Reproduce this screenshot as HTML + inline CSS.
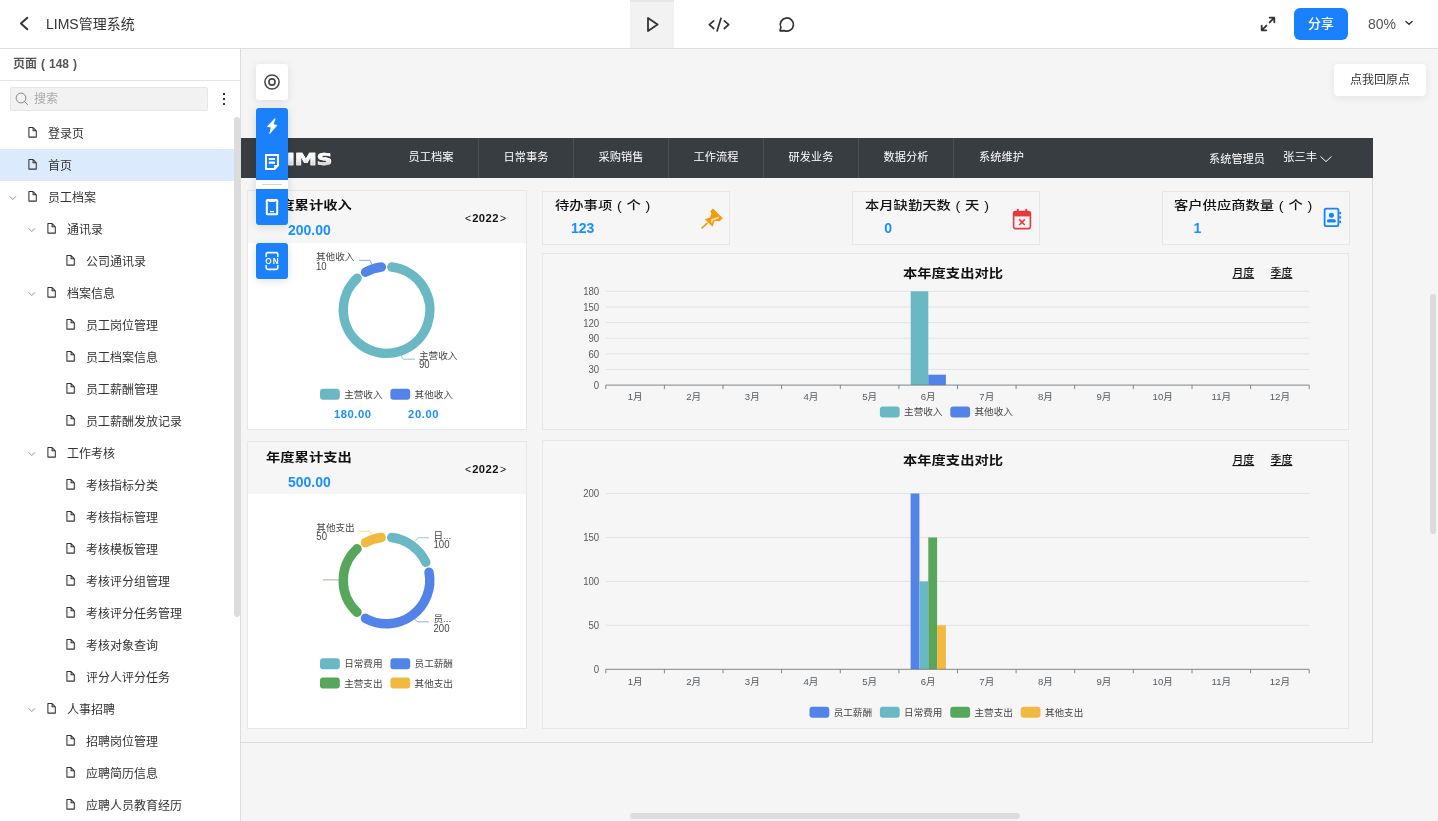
<!DOCTYPE html><html lang="zh-CN"><head><meta charset="utf-8"><title>LIMS管理系统</title><style>
*{box-sizing:border-box;margin:0;padding:0}
html,body{width:1438px;height:821px;overflow:hidden;background:#f5f5f5;font-family:"Liberation Sans", "Noto Sans CJK SC", sans-serif;color:#333}
.abs{position:absolute}
#top,#side,#canvas{will-change:transform}
#top{position:absolute;left:0;top:0;width:1438px;height:49px;z-index:30}
#topbg{position:absolute;left:0;top:0;width:1438px;height:49px;background:#fff;border-bottom:1px solid #dedede;z-index:29}
#side{position:absolute;left:0;top:49px;width:241px;height:772px;z-index:20;overflow:hidden}
#sidebg{position:absolute;left:0;top:49px;width:241px;height:772px;background:#fff;border-right:1px solid #dcdcdc;z-index:19}
#canvas{position:absolute;left:241px;top:49px;width:1197px;height:772px;overflow:hidden}
.row{position:absolute;left:0;width:234px;height:32px;font-size:12px;line-height:32px;color:#333;white-space:nowrap}
.row.sel{background:#dbeafc}
.row svg{position:absolute}
.row span{position:absolute;top:1px}
.t{position:absolute;white-space:nowrap}
.bold{font-weight:bold}
.blue{color:#1890ff}
.card{position:absolute;border:1px solid #e7e7e7;background:#f6f6f6}
.menu{position:absolute;top:0;height:40px;width:95px;text-align:center;color:#fff;font-size:11.2px;line-height:38px;border-right:1px solid #4a4f54}
.fbtn{position:absolute;left:15px;width:32px;background:#1a80fc;box-shadow:0 2px 10px rgba(0,0,0,.12)}
.fp{display:inline-block;text-align:center}
.lg{position:absolute;font-size:9.6px;line-height:12px;color:#444;white-space:nowrap}
.sw{position:absolute;width:20px;height:11px;border-radius:3px}
</style></head><body>
<div id="topbg"></div><div id="sidebg"></div>
<div id="top">
<svg class="abs" style="left:17px;top:15px" width="14" height="18" viewBox="0 0 14 18"><path d="M10.3 2.7 L3.9 8.5 L10.3 14.3" fill="none" stroke="#333" stroke-width="1.9" stroke-linecap="round" stroke-linejoin="round"/></svg>
<div class="t" style="left:46px;top:14px;font-size:14px;line-height:20px;color:#333">LIMS管理系统</div>
<div class="abs" style="left:630px;top:0;width:44px;height:48px;background:#f2f2f2;border-top:2px solid #e6e6e6"></div>
<svg class="abs" style="left:644px;top:14px" width="20" height="20" viewBox="0 0 20 20"><path d="M4 4 L4 17 L13.6 10.5 Z" fill="none" stroke="#333" stroke-width="1.8" stroke-linejoin="round"/></svg>
<svg class="abs" style="left:706px;top:14px" width="26" height="20" viewBox="0 0 26 20"><path d="M7.7 6.9 L3.3 10.7 L7.7 14.5 M18.3 6.9 L22.7 10.7 L18.3 14.5 M15 4.2 L11.1 17" fill="none" stroke="#333" stroke-width="1.7" stroke-linecap="round" stroke-linejoin="round"/></svg>
<svg class="abs" style="left:776px;top:14px" width="20" height="20" viewBox="0 0 20 20"><path d="M4 16.8 L4.9 13.4 A6.6 6.6 0 1 1 8.2 16.6 Z" fill="none" stroke="#333" stroke-width="1.7" stroke-linejoin="round"/></svg>
<svg class="abs" style="left:1258px;top:14px" width="20" height="20" viewBox="0 0 20 20"><path d="M3.7 16.3 L8.4 11.6 M3.7 11.7 L3.7 16.3 L8.3 16.3 M16.3 3.7 L11.6 8.4 M11.7 3.7 L16.3 3.7 L16.3 8.3" fill="none" stroke="#333" stroke-width="1.8" stroke-linecap="round" stroke-linejoin="round"/></svg>
<div class="abs" style="left:1294px;top:8px;width:54px;height:32px;border-radius:6px;background:#1a80fc;color:#fff;font-size:13px;line-height:31px;text-align:center;font-weight:500">分享</div>
<div class="t" style="left:1368px;top:14px;font-size:14px;line-height:20px;color:#555">80%</div>
<svg class="abs" style="left:1403px;top:18px" width="12" height="10" viewBox="0 0 12 10"><path d="M2.9 3.4 L6 6.3 L9.1 3.4" fill="none" stroke="#333" stroke-width="1.4" stroke-linecap="round" stroke-linejoin="round"/></svg>
</div>
<div id="side">
<div class="t bold" style="left:13px;top:6px;font-size:12px;line-height:18px;color:#555">页面<span class="fp" style="width:12px">(</span>148<span class="fp" style="width:12px">)</span></div>
<div class="abs" style="left:0;top:31px;width:240px;height:1px;background:#e3e3e3"></div>
<div class="abs" style="left:10px;top:38px;width:198px;height:24px;background:#f2f2f2;border:1px solid #e6e6e6;border-radius:2px"></div>
<svg class="abs" style="left:14px;top:42px" width="16" height="16" viewBox="0 0 16 16"><circle cx="7" cy="7" r="4.9" fill="none" stroke="#888" stroke-width="1"/><path d="M10.6 10.6 L13.6 13.6" stroke="#888" stroke-width="1" stroke-linecap="round"/></svg>
<div class="t" style="left:34px;top:41px;font-size:12px;line-height:18px;color:#aaa">搜索</div>
<div class="abs" style="left:223px;top:44px;width:2px;height:2px;background:#333"></div>
<div class="abs" style="left:223px;top:49px;width:2px;height:2px;background:#333"></div>
<div class="abs" style="left:223px;top:54px;width:2px;height:2px;background:#333"></div>
<div class="abs" style="left:234px;top:68px;width:6px;height:500px;background:#dcdcdc;border-radius:3px;z-index:5"></div>
<div class="row" style="top:68px">
<svg style="left:26.5px;top:9px" width="11" height="13" viewBox="0 0 11 13"><path d="M1.9 1.5 H6.1 L9.3 4.8 V11.1 H1.9 Z M6.1 1.5 V4.8 H9.3" fill="none" stroke="#333" stroke-width="1.05" stroke-linejoin="round"/></svg>
<span style="left:48px">登录页</span>
</div>
<div class="row sel" style="top:100px">
<svg style="left:26.5px;top:9px" width="11" height="13" viewBox="0 0 11 13"><path d="M1.9 1.5 H6.1 L9.3 4.8 V11.1 H1.9 Z M6.1 1.5 V4.8 H9.3" fill="none" stroke="#333" stroke-width="1.05" stroke-linejoin="round"/></svg>
<span style="left:48px">首页</span>
</div>
<div class="row" style="top:132px">
<svg style="left:7.5px;top:12.5px" width="9" height="8" viewBox="0 0 9 8"><path d="M1.7 2.5 L4.8 5.5 L7.9 2.5" fill="none" stroke="#8a8a8a" stroke-width="0.9" stroke-linecap="round" stroke-linejoin="round"/></svg>
<svg style="left:26.5px;top:9px" width="11" height="13" viewBox="0 0 11 13"><path d="M1.9 1.5 H6.1 L9.3 4.8 V11.1 H1.9 Z M6.1 1.5 V4.8 H9.3" fill="none" stroke="#333" stroke-width="1.05" stroke-linejoin="round"/></svg>
<span style="left:48px">员工档案</span>
</div>
<div class="row" style="top:164px">
<svg style="left:26.5px;top:12.5px" width="9" height="8" viewBox="0 0 9 8"><path d="M1.7 2.5 L4.8 5.5 L7.9 2.5" fill="none" stroke="#8a8a8a" stroke-width="0.9" stroke-linecap="round" stroke-linejoin="round"/></svg>
<svg style="left:45.5px;top:9px" width="11" height="13" viewBox="0 0 11 13"><path d="M1.9 1.5 H6.1 L9.3 4.8 V11.1 H1.9 Z M6.1 1.5 V4.8 H9.3" fill="none" stroke="#333" stroke-width="1.05" stroke-linejoin="round"/></svg>
<span style="left:67px">通讯录</span>
</div>
<div class="row" style="top:196px">
<svg style="left:64.5px;top:9px" width="11" height="13" viewBox="0 0 11 13"><path d="M1.9 1.5 H6.1 L9.3 4.8 V11.1 H1.9 Z M6.1 1.5 V4.8 H9.3" fill="none" stroke="#333" stroke-width="1.05" stroke-linejoin="round"/></svg>
<span style="left:86px">公司通讯录</span>
</div>
<div class="row" style="top:228px">
<svg style="left:26.5px;top:12.5px" width="9" height="8" viewBox="0 0 9 8"><path d="M1.7 2.5 L4.8 5.5 L7.9 2.5" fill="none" stroke="#8a8a8a" stroke-width="0.9" stroke-linecap="round" stroke-linejoin="round"/></svg>
<svg style="left:45.5px;top:9px" width="11" height="13" viewBox="0 0 11 13"><path d="M1.9 1.5 H6.1 L9.3 4.8 V11.1 H1.9 Z M6.1 1.5 V4.8 H9.3" fill="none" stroke="#333" stroke-width="1.05" stroke-linejoin="round"/></svg>
<span style="left:67px">档案信息</span>
</div>
<div class="row" style="top:260px">
<svg style="left:64.5px;top:9px" width="11" height="13" viewBox="0 0 11 13"><path d="M1.9 1.5 H6.1 L9.3 4.8 V11.1 H1.9 Z M6.1 1.5 V4.8 H9.3" fill="none" stroke="#333" stroke-width="1.05" stroke-linejoin="round"/></svg>
<span style="left:86px">员工岗位管理</span>
</div>
<div class="row" style="top:292px">
<svg style="left:64.5px;top:9px" width="11" height="13" viewBox="0 0 11 13"><path d="M1.9 1.5 H6.1 L9.3 4.8 V11.1 H1.9 Z M6.1 1.5 V4.8 H9.3" fill="none" stroke="#333" stroke-width="1.05" stroke-linejoin="round"/></svg>
<span style="left:86px">员工档案信息</span>
</div>
<div class="row" style="top:324px">
<svg style="left:64.5px;top:9px" width="11" height="13" viewBox="0 0 11 13"><path d="M1.9 1.5 H6.1 L9.3 4.8 V11.1 H1.9 Z M6.1 1.5 V4.8 H9.3" fill="none" stroke="#333" stroke-width="1.05" stroke-linejoin="round"/></svg>
<span style="left:86px">员工薪酬管理</span>
</div>
<div class="row" style="top:356px">
<svg style="left:64.5px;top:9px" width="11" height="13" viewBox="0 0 11 13"><path d="M1.9 1.5 H6.1 L9.3 4.8 V11.1 H1.9 Z M6.1 1.5 V4.8 H9.3" fill="none" stroke="#333" stroke-width="1.05" stroke-linejoin="round"/></svg>
<span style="left:86px">员工薪酬发放记录</span>
</div>
<div class="row" style="top:388px">
<svg style="left:26.5px;top:12.5px" width="9" height="8" viewBox="0 0 9 8"><path d="M1.7 2.5 L4.8 5.5 L7.9 2.5" fill="none" stroke="#8a8a8a" stroke-width="0.9" stroke-linecap="round" stroke-linejoin="round"/></svg>
<svg style="left:45.5px;top:9px" width="11" height="13" viewBox="0 0 11 13"><path d="M1.9 1.5 H6.1 L9.3 4.8 V11.1 H1.9 Z M6.1 1.5 V4.8 H9.3" fill="none" stroke="#333" stroke-width="1.05" stroke-linejoin="round"/></svg>
<span style="left:67px">工作考核</span>
</div>
<div class="row" style="top:420px">
<svg style="left:64.5px;top:9px" width="11" height="13" viewBox="0 0 11 13"><path d="M1.9 1.5 H6.1 L9.3 4.8 V11.1 H1.9 Z M6.1 1.5 V4.8 H9.3" fill="none" stroke="#333" stroke-width="1.05" stroke-linejoin="round"/></svg>
<span style="left:86px">考核指标分类</span>
</div>
<div class="row" style="top:452px">
<svg style="left:64.5px;top:9px" width="11" height="13" viewBox="0 0 11 13"><path d="M1.9 1.5 H6.1 L9.3 4.8 V11.1 H1.9 Z M6.1 1.5 V4.8 H9.3" fill="none" stroke="#333" stroke-width="1.05" stroke-linejoin="round"/></svg>
<span style="left:86px">考核指标管理</span>
</div>
<div class="row" style="top:484px">
<svg style="left:64.5px;top:9px" width="11" height="13" viewBox="0 0 11 13"><path d="M1.9 1.5 H6.1 L9.3 4.8 V11.1 H1.9 Z M6.1 1.5 V4.8 H9.3" fill="none" stroke="#333" stroke-width="1.05" stroke-linejoin="round"/></svg>
<span style="left:86px">考核模板管理</span>
</div>
<div class="row" style="top:516px">
<svg style="left:64.5px;top:9px" width="11" height="13" viewBox="0 0 11 13"><path d="M1.9 1.5 H6.1 L9.3 4.8 V11.1 H1.9 Z M6.1 1.5 V4.8 H9.3" fill="none" stroke="#333" stroke-width="1.05" stroke-linejoin="round"/></svg>
<span style="left:86px">考核评分组管理</span>
</div>
<div class="row" style="top:548px">
<svg style="left:64.5px;top:9px" width="11" height="13" viewBox="0 0 11 13"><path d="M1.9 1.5 H6.1 L9.3 4.8 V11.1 H1.9 Z M6.1 1.5 V4.8 H9.3" fill="none" stroke="#333" stroke-width="1.05" stroke-linejoin="round"/></svg>
<span style="left:86px">考核评分任务管理</span>
</div>
<div class="row" style="top:580px">
<svg style="left:64.5px;top:9px" width="11" height="13" viewBox="0 0 11 13"><path d="M1.9 1.5 H6.1 L9.3 4.8 V11.1 H1.9 Z M6.1 1.5 V4.8 H9.3" fill="none" stroke="#333" stroke-width="1.05" stroke-linejoin="round"/></svg>
<span style="left:86px">考核对象查询</span>
</div>
<div class="row" style="top:612px">
<svg style="left:64.5px;top:9px" width="11" height="13" viewBox="0 0 11 13"><path d="M1.9 1.5 H6.1 L9.3 4.8 V11.1 H1.9 Z M6.1 1.5 V4.8 H9.3" fill="none" stroke="#333" stroke-width="1.05" stroke-linejoin="round"/></svg>
<span style="left:86px">评分人评分任务</span>
</div>
<div class="row" style="top:644px">
<svg style="left:26.5px;top:12.5px" width="9" height="8" viewBox="0 0 9 8"><path d="M1.7 2.5 L4.8 5.5 L7.9 2.5" fill="none" stroke="#8a8a8a" stroke-width="0.9" stroke-linecap="round" stroke-linejoin="round"/></svg>
<svg style="left:45.5px;top:9px" width="11" height="13" viewBox="0 0 11 13"><path d="M1.9 1.5 H6.1 L9.3 4.8 V11.1 H1.9 Z M6.1 1.5 V4.8 H9.3" fill="none" stroke="#333" stroke-width="1.05" stroke-linejoin="round"/></svg>
<span style="left:67px">人事招聘</span>
</div>
<div class="row" style="top:676px">
<svg style="left:64.5px;top:9px" width="11" height="13" viewBox="0 0 11 13"><path d="M1.9 1.5 H6.1 L9.3 4.8 V11.1 H1.9 Z M6.1 1.5 V4.8 H9.3" fill="none" stroke="#333" stroke-width="1.05" stroke-linejoin="round"/></svg>
<span style="left:86px">招聘岗位管理</span>
</div>
<div class="row" style="top:708px">
<svg style="left:64.5px;top:9px" width="11" height="13" viewBox="0 0 11 13"><path d="M1.9 1.5 H6.1 L9.3 4.8 V11.1 H1.9 Z M6.1 1.5 V4.8 H9.3" fill="none" stroke="#333" stroke-width="1.05" stroke-linejoin="round"/></svg>
<span style="left:86px">应聘简历信息</span>
</div>
<div class="row" style="top:740px">
<svg style="left:64.5px;top:9px" width="11" height="13" viewBox="0 0 11 13"><path d="M1.9 1.5 H6.1 L9.3 4.8 V11.1 H1.9 Z M6.1 1.5 V4.8 H9.3" fill="none" stroke="#333" stroke-width="1.05" stroke-linejoin="round"/></svg>
<span style="left:86px">应聘人员教育经历</span>
</div>
</div>
<div id="canvas">
<div class="abs" style="left:0;top:89px;width:1132px;height:605px;border-right:1px solid #dcdcdc;border-bottom:1px solid #dcdcdc"></div>
<div class="abs" style="left:0;top:89px;width:1132px;height:40px;background:#383d42">
<div class="t" style="left:32px;top:13.4px;font-family:'DejaVu Sans',sans-serif;font-weight:bold;font-size:16.4px;line-height:18px;transform:scaleX(1.36);transform-origin:0 0;letter-spacing:-.3px;-webkit-text-stroke:.5px #fff;background:linear-gradient(180deg,#fff 35%,#c8c8c8 85%);-webkit-background-clip:text;background-clip:text;color:transparent">LIMS</div>
<div class="menu" style="left:143px">员工档案</div>
<div class="menu" style="left:238px">日常事务</div>
<div class="menu" style="left:333px">采购销售</div>
<div class="menu" style="left:428px">工作流程</div>
<div class="menu" style="left:523px">研发业务</div>
<div class="menu" style="left:618px">数据分析</div>
<div class="menu" style="left:713px;border-right:none">系统维护</div>
<div class="t" style="left:968px;top:12px;color:#fff;font-size:11.2px;line-height:18px">系统管理员</div>
<div class="t" style="left:1042px;top:10px;color:#fff;font-size:11.4px;line-height:18px">张三丰</div>
<svg class="abs" style="left:1078px;top:16px" width="14" height="10" viewBox="0 0 14 10"><path d="M1.8 2.7 L7 7.6 L12.2 2.7" fill="none" stroke="#fff" stroke-width="1" stroke-linecap="round" stroke-linejoin="round"/></svg>
</div>
<div class="card" style="left:6px;top:141px;width:280px;height:240px;background:#fff">
<div class="abs" style="left:0;top:0;width:278px;height:52px;background:#f6f6f6"></div>
<div class="t bold" style="left:18px;top:4.7px;font-size:14.3px;line-height:20px;color:#111;transform:scaleY(.85)">年度累计收入</div>
<div class="t bold blue" style="left:40px;top:29.9px;font-size:14px;line-height:18px">200.00</div>
<div class="t bold" style="left:217px;top:18px;font-size:11.2px;line-height:18px;color:#111"><span style="font-weight:normal;font-size:10.5px;position:relative;top:-.3px">&lt;</span><span style="letter-spacing:.5px;margin-left:1px">2022</span><span style="font-weight:normal;font-size:10.5px;position:relative;top:-.3px;margin-left:1px">&gt;</span></div>
</div>
<div class="card" style="left:6px;top:392px;width:280px;height:288px;background:#fff">
<div class="abs" style="left:0;top:0;width:278px;height:52px;background:#f6f6f6"></div>
<div class="t bold" style="left:18px;top:5.6px;font-size:14.3px;line-height:20px;color:#111;transform:scaleY(.85)">年度累计支出</div>
<div class="t bold blue" style="left:40px;top:30.8px;font-size:14px;line-height:18px">500.00</div>
<div class="t bold" style="left:217px;top:18px;font-size:11.2px;line-height:18px;color:#111"><span style="font-weight:normal;font-size:10.5px;position:relative;top:-.3px">&lt;</span><span style="letter-spacing:.5px;margin-left:1px">2022</span><span style="font-weight:normal;font-size:10.5px;position:relative;top:-.3px;margin-left:1px">&gt;</span></div>
</div>
<div class="card" style="left:301px;top:142px;width:188px;height:54px">
<div class="t" style="left:12px;top:3.5px;font-size:14.3px;line-height:20px;color:#111;font-weight:500;transform:scaleY(.85)">待办事项<span class="fp" style="width:14.3px">(</span>个<span class="fp" style="width:14.3px">)</span></div>
<div class="t bold blue" style="left:28.0px;top:27.2px;font-size:14px;line-height:18px">123</div>
<svg class="abs" style="left:157.4px;top:15.3px" width="24" height="24" viewBox="0 0 24 24"><path d="M2 21 L7 16.3" stroke="#f39c0b" stroke-width="1.7" stroke-linecap="round" fill="none"/><path d="M13 1.6 L22.8 11.2 L19.2 14.2 L14.6 13.8 L12.6 19.8 L4.8 12.2 L10 10.6 L11.4 6.2 L10.2 4.2 Z" fill="#f39c0b"/><path d="M11.2 12.2 L19.4 9.6 L18.8 11.2 L12.6 13.4 L12.2 16.6 L11 15 Z" fill="#fbe6c4"/></svg>
</div>
<div class="card" style="left:611px;top:142px;width:188px;height:54px">
<div class="t" style="left:12px;top:3.5px;font-size:14.3px;line-height:20px;color:#111;font-weight:500;transform:scaleY(.85)">本月缺勤天数<span class="fp" style="width:14.3px">(</span>天<span class="fp" style="width:14.3px">)</span></div>
<div class="t bold blue" style="left:31.3px;top:27.2px;font-size:14px;line-height:18px">0</div>
<svg class="abs" style="left:158px;top:15px" width="22" height="24" viewBox="0 0 22 24"><rect x="2.6" y="4.6" width="16.8" height="17" rx="2" fill="none" stroke="#e8393c" stroke-width="1.6"/><rect x="2.6" y="4.6" width="16.8" height="4.8" fill="#e8393c"/><path d="M6.8 2.6 V6 M15.2 2.6 V6" stroke="#e8393c" stroke-width="1.9" stroke-linecap="round"/><path d="M8.2 12.4 L13.8 18 M13.8 12.4 L8.2 18" stroke="#e8393c" stroke-width="1.6"/></svg>
</div>
<div class="card" style="left:921px;top:142px;width:188px;height:54px">
<div class="t" style="left:11px;top:3.5px;font-size:14.3px;line-height:20px;color:#111;font-weight:500;transform:scaleY(.85)">客户供应商数量<span class="fp" style="width:14.3px">(</span>个<span class="fp" style="width:14.3px">)</span></div>
<div class="t bold blue" style="left:30.4px;top:27.2px;font-size:14px;line-height:18px">1</div>
<svg class="abs" style="left:157.3px;top:13px" width="24" height="24" viewBox="0 0 24 24"><rect x="4.6" y="3.6" width="13.8" height="17.6" rx="1.6" fill="none" stroke="#1184ff" stroke-width="1.8"/><circle cx="11.4" cy="10.2" r="2.5" fill="#1184ff"/><rect x="6.9" y="14.2" width="9" height="3.4" rx="1.7" fill="#1184ff"/><path d="M20.2 7.6 V8.4 M20.2 12 V12.8 M20.2 16.4 V17.2" stroke="#1184ff" stroke-width="1.9" stroke-linecap="round"/></svg>
</div>
<div class="card" style="left:301px;top:204px;width:807px;height:177px"></div>
<div class="card" style="left:301px;top:391px;width:807px;height:289px"></div>
<svg class="abs" style="left:0;top:0" width="1197" height="772" viewBox="241 49 1197 772"><path d="M391.79 267.01 A43.30 43.30 0 1 1 357.14 278.27" fill="none" stroke="#69b8c3" stroke-width="9.40" stroke-linecap="round"/><path d="M365.53 272.17 A43.30 43.30 0 0 1 381.41 267.01" fill="none" stroke="#5283e8" stroke-width="9.40" stroke-linecap="round"/><path d="M359 260.4 H370 L372.2 264.4" fill="none" stroke="#7fa3ee" stroke-width=".9"/><path d="M400.6 355.2 L403.4 359.2 H415" fill="none" stroke="#82c3cc" stroke-width=".9"/><text x="316" y="260" font-size="9.6" fill="#444">其他收入</text><text transform="translate(316 269.9) scale(.89 1)" font-size="10.8" fill="#444">10</text><text x="419" y="359" font-size="9.6" fill="#444">主营收入</text><text transform="translate(419 367.9) scale(.89 1)" font-size="10.8" fill="#444">90</text><rect x="320.0" y="388.8" width="19.8" height="11" rx="3" fill="#69b8c3"/><text x="344.2" y="397.8" font-size="9.6" fill="#444">主营收入</text><rect x="390.4" y="388.8" width="19.8" height="11" rx="3" fill="#5283e8"/><text x="414.6" y="397.8" font-size="9.6" fill="#444">其他收入</text><text x="352.8" y="418.2" font-size="11.2" font-weight="bold" fill="#1890ff" text-anchor="middle" letter-spacing=".6">180.00</text><text x="423.6" y="418.2" font-size="11.2" font-weight="bold" fill="#1890ff" text-anchor="middle" letter-spacing=".6">20.00</text><path d="M391.69 537.51 A43.30 43.30 0 0 1 425.78 562.28" fill="none" stroke="#69b8c3" stroke-width="9.40" stroke-linecap="round"/><path d="M428.99 572.15 A43.30 43.30 0 0 1 365.43 618.33" fill="none" stroke="#5283e8" stroke-width="9.40" stroke-linecap="round"/><path d="M357.04 612.23 A43.30 43.30 0 0 1 357.04 548.77" fill="none" stroke="#58a55c" stroke-width="9.40" stroke-linecap="round"/><path d="M365.43 542.67 A43.30 43.30 0 0 1 381.31 537.51" fill="none" stroke="#f2b941" stroke-width="9.40" stroke-linecap="round"/><path d="M358.7 531.2 H370 L372.3 535.3" fill="none" stroke="#f5cf7a" stroke-width=".8"/><path d="M415.5 540.2 L418.6 537.8 H428.9" fill="none" stroke="#82c3cc" stroke-width=".9"/><path d="M322.9 579.9 H338.7" fill="none" stroke="#6fb473" stroke-width=".8"/><path d="M414.7 619.4 L417.9 621.8 H428.9" fill="none" stroke="#7fa3ee" stroke-width=".9"/><text x="316.3" y="530.6" font-size="9.6" fill="#444">其他支出</text><text transform="translate(316.3 540.3) scale(.89 1)" font-size="10.8" fill="#444">50</text><text x="433.5" y="538.6" font-size="9.6" fill="#444">日...</text><text transform="translate(433.5 547.9) scale(.89 1)" font-size="10.8" fill="#444">100</text><text x="433.5" y="622.4" font-size="9.6" fill="#444">员...</text><text transform="translate(433.5 631.7) scale(.89 1)" font-size="10.8" fill="#444">200</text><rect x="320.0" y="658.3" width="19.8" height="11" rx="3" fill="#69b8c3"/><text x="344.2" y="667.3" font-size="9.6" fill="#444">日常费用</text><rect x="390.4" y="658.3" width="19.8" height="11" rx="3" fill="#5283e8"/><text x="414.6" y="667.3" font-size="9.6" fill="#444">员工薪酬</text><rect x="320.0" y="677.5" width="19.8" height="11" rx="3" fill="#58a55c"/><text x="344.2" y="686.5" font-size="9.6" fill="#444">主营支出</text><rect x="390.4" y="677.5" width="19.8" height="11" rx="3" fill="#f2b941"/><text x="414.6" y="686.5" font-size="9.6" fill="#444">其他支出</text><path d="M605.8 369.5 H1309.2" stroke="#e3e4e7" stroke-width="1"/><path d="M605.8 353.8 H1309.2" stroke="#e3e4e7" stroke-width="1"/><path d="M605.8 338.2 H1309.2" stroke="#e3e4e7" stroke-width="1"/><path d="M605.8 322.6 H1309.2" stroke="#e3e4e7" stroke-width="1"/><path d="M605.8 306.9 H1309.2" stroke="#e3e4e7" stroke-width="1"/><path d="M605.8 291.3 H1309.2" stroke="#e3e4e7" stroke-width="1"/><text transform="translate(599.2 389.0) scale(.89 1)" font-size="10.8" fill="#545a60" text-anchor="end">0</text><text transform="translate(599.2 373.4) scale(.89 1)" font-size="10.8" fill="#545a60" text-anchor="end">30</text><text transform="translate(599.2 357.7) scale(.89 1)" font-size="10.8" fill="#545a60" text-anchor="end">60</text><text transform="translate(599.2 342.1) scale(.89 1)" font-size="10.8" fill="#545a60" text-anchor="end">90</text><text transform="translate(599.2 326.5) scale(.89 1)" font-size="10.8" fill="#545a60" text-anchor="end">120</text><text transform="translate(599.2 310.8) scale(.89 1)" font-size="10.8" fill="#545a60" text-anchor="end">150</text><text transform="translate(599.2 295.2) scale(.89 1)" font-size="10.8" fill="#545a60" text-anchor="end">180</text><rect x="910.7" y="291.3" width="17.6" height="93.8" fill="#69b8c3"/><rect x="928.3" y="374.7" width="17.6" height="10.4" fill="#5283e8"/><path d="M605.8 385.1 H1309.2" stroke="#737980" stroke-width=".9"/><path d="M605.8 385.1 V389.1" stroke="#737980" stroke-width=".9"/><path d="M664.4 385.1 V389.1" stroke="#737980" stroke-width=".9"/><path d="M723.0 385.1 V389.1" stroke="#737980" stroke-width=".9"/><path d="M781.6 385.1 V389.1" stroke="#737980" stroke-width=".9"/><path d="M840.3 385.1 V389.1" stroke="#737980" stroke-width=".9"/><path d="M898.9 385.1 V389.1" stroke="#737980" stroke-width=".9"/><path d="M957.5 385.1 V389.1" stroke="#737980" stroke-width=".9"/><path d="M1016.1 385.1 V389.1" stroke="#737980" stroke-width=".9"/><path d="M1074.7 385.1 V389.1" stroke="#737980" stroke-width=".9"/><path d="M1133.3 385.1 V389.1" stroke="#737980" stroke-width=".9"/><path d="M1192.0 385.1 V389.1" stroke="#737980" stroke-width=".9"/><path d="M1250.6 385.1 V389.1" stroke="#737980" stroke-width=".9"/><path d="M1309.2 385.1 V389.1" stroke="#737980" stroke-width=".9"/><text x="635.1" y="400.4" font-size="9.6" fill="#545a60" text-anchor="middle">1月</text><text x="693.7" y="400.4" font-size="9.6" fill="#545a60" text-anchor="middle">2月</text><text x="752.3" y="400.4" font-size="9.6" fill="#545a60" text-anchor="middle">3月</text><text x="811.0" y="400.4" font-size="9.6" fill="#545a60" text-anchor="middle">4月</text><text x="869.6" y="400.4" font-size="9.6" fill="#545a60" text-anchor="middle">5月</text><text x="928.2" y="400.4" font-size="9.6" fill="#545a60" text-anchor="middle">6月</text><text x="986.8" y="400.4" font-size="9.6" fill="#545a60" text-anchor="middle">7月</text><text x="1045.4" y="400.4" font-size="9.6" fill="#545a60" text-anchor="middle">8月</text><text x="1104.0" y="400.4" font-size="9.6" fill="#545a60" text-anchor="middle">9月</text><text x="1162.7" y="400.4" font-size="9.6" fill="#545a60" text-anchor="middle">10月</text><text x="1221.3" y="400.4" font-size="9.6" fill="#545a60" text-anchor="middle">11月</text><text x="1279.9" y="400.4" font-size="9.6" fill="#545a60" text-anchor="middle">12月</text><text transform="translate(953 277.7) scale(1 .85)" font-size="14.3" font-weight="bold" fill="#111" text-anchor="middle">本年度支出对比</text><text x="1243.3" y="276.8" font-size="10.9" font-weight="500" fill="#111" text-anchor="middle" text-decoration="underline">月度</text><text x="1281.5" y="276.8" font-size="10.9" font-weight="500" fill="#111" text-anchor="middle" text-decoration="underline">季度</text><rect x="879.9" y="406.4" width="19.8" height="11" rx="3" fill="#69b8c3"/><text x="904.1" y="415.4" font-size="9.6" fill="#444">主营收入</text><rect x="950.3" y="406.4" width="19.8" height="11" rx="3" fill="#5283e8"/><text x="974.5" y="415.4" font-size="9.6" fill="#444">其他收入</text><path d="M605.8 625.3 H1309.2" stroke="#e3e4e7" stroke-width="1"/><path d="M605.8 581.4 H1309.2" stroke="#e3e4e7" stroke-width="1"/><path d="M605.8 537.5 H1309.2" stroke="#e3e4e7" stroke-width="1"/><path d="M605.8 493.5 H1309.2" stroke="#e3e4e7" stroke-width="1"/><text transform="translate(599.2 673.2) scale(.89 1)" font-size="10.8" fill="#545a60" text-anchor="end">0</text><text transform="translate(599.2 629.2) scale(.89 1)" font-size="10.8" fill="#545a60" text-anchor="end">50</text><text transform="translate(599.2 585.3) scale(.89 1)" font-size="10.8" fill="#545a60" text-anchor="end">100</text><text transform="translate(599.2 541.4) scale(.89 1)" font-size="10.8" fill="#545a60" text-anchor="end">150</text><text transform="translate(599.2 497.4) scale(.89 1)" font-size="10.8" fill="#545a60" text-anchor="end">200</text><rect x="910.6" y="493.5" width="8.8" height="175.8" fill="#5283e8"/><rect x="919.4" y="581.4" width="8.9" height="87.9" fill="#69b8c3"/><rect x="928.3" y="537.5" width="8.8" height="131.8" fill="#58a55c"/><rect x="937.1" y="625.3" width="8.8" height="43.9" fill="#f2b941"/><path d="M605.8 669.3 H1309.2" stroke="#737980" stroke-width=".9"/><path d="M605.8 669.3 V673.3" stroke="#737980" stroke-width=".9"/><path d="M664.4 669.3 V673.3" stroke="#737980" stroke-width=".9"/><path d="M723.0 669.3 V673.3" stroke="#737980" stroke-width=".9"/><path d="M781.6 669.3 V673.3" stroke="#737980" stroke-width=".9"/><path d="M840.3 669.3 V673.3" stroke="#737980" stroke-width=".9"/><path d="M898.9 669.3 V673.3" stroke="#737980" stroke-width=".9"/><path d="M957.5 669.3 V673.3" stroke="#737980" stroke-width=".9"/><path d="M1016.1 669.3 V673.3" stroke="#737980" stroke-width=".9"/><path d="M1074.7 669.3 V673.3" stroke="#737980" stroke-width=".9"/><path d="M1133.3 669.3 V673.3" stroke="#737980" stroke-width=".9"/><path d="M1192.0 669.3 V673.3" stroke="#737980" stroke-width=".9"/><path d="M1250.6 669.3 V673.3" stroke="#737980" stroke-width=".9"/><path d="M1309.2 669.3 V673.3" stroke="#737980" stroke-width=".9"/><text x="635.1" y="685.4" font-size="9.6" fill="#545a60" text-anchor="middle">1月</text><text x="693.7" y="685.4" font-size="9.6" fill="#545a60" text-anchor="middle">2月</text><text x="752.3" y="685.4" font-size="9.6" fill="#545a60" text-anchor="middle">3月</text><text x="811.0" y="685.4" font-size="9.6" fill="#545a60" text-anchor="middle">4月</text><text x="869.6" y="685.4" font-size="9.6" fill="#545a60" text-anchor="middle">5月</text><text x="928.2" y="685.4" font-size="9.6" fill="#545a60" text-anchor="middle">6月</text><text x="986.8" y="685.4" font-size="9.6" fill="#545a60" text-anchor="middle">7月</text><text x="1045.4" y="685.4" font-size="9.6" fill="#545a60" text-anchor="middle">8月</text><text x="1104.0" y="685.4" font-size="9.6" fill="#545a60" text-anchor="middle">9月</text><text x="1162.7" y="685.4" font-size="9.6" fill="#545a60" text-anchor="middle">10月</text><text x="1221.3" y="685.4" font-size="9.6" fill="#545a60" text-anchor="middle">11月</text><text x="1279.9" y="685.4" font-size="9.6" fill="#545a60" text-anchor="middle">12月</text><text transform="translate(953 464.9) scale(1 .85)" font-size="14.3" font-weight="bold" fill="#111" text-anchor="middle">本年度支出对比</text><text x="1243.3" y="464.0" font-size="10.9" font-weight="500" fill="#111" text-anchor="middle" text-decoration="underline">月度</text><text x="1281.5" y="464.0" font-size="10.9" font-weight="500" fill="#111" text-anchor="middle" text-decoration="underline">季度</text><rect x="809.5" y="706.8" width="19.8" height="11" rx="3" fill="#5283e8"/><text x="833.7" y="715.8" font-size="9.6" fill="#444">员工薪酬</text><rect x="879.9" y="706.8" width="19.8" height="11" rx="3" fill="#69b8c3"/><text x="904.1" y="715.8" font-size="9.6" fill="#444">日常费用</text><rect x="950.3" y="706.8" width="19.8" height="11" rx="3" fill="#58a55c"/><text x="974.5" y="715.8" font-size="9.6" fill="#444">主营支出</text><rect x="1020.7" y="706.8" width="19.8" height="11" rx="3" fill="#f2b941"/><text x="1044.9" y="715.8" font-size="9.6" fill="#444">其他支出</text></svg>
<div class="abs" style="left:15px;top:15px;width:32px;height:36px;background:#fff;border-radius:3px;box-shadow:0 2px 10px rgba(0,0,0,.10)"></div>
<svg class="abs" style="left:21px;top:23px" width="20" height="20" viewBox="0 0 20 20"><circle cx="10" cy="10" r="7.1" fill="none" stroke="#444" stroke-width="1.5"/><circle cx="10" cy="10" r="3.1" fill="none" stroke="#444" stroke-width="1.6"/></svg>
<div class="fbtn" style="top:59px;height:117px;border-radius:3px;background:#fff"></div>
<div class="abs" style="left:15px;top:59px;width:32px;height:72px;background:#1a80fc;border-radius:3px 3px 0 0"></div>
<div class="abs" style="left:21px;top:135px;width:20px;height:1px;background:#d4d4d4"></div>
<div class="abs" style="left:15px;top:140px;width:32px;height:36px;background:#1a80fc;border-radius:0 0 3px 3px"></div>
<svg class="abs" style="left:24px;top:68px" width="14" height="18" viewBox="0 0 14 18"><path d="M10 1.6 L2.5 9.4 L6.3 10.2 L4.8 16.5 L11.8 8.4 L8.1 7.6 Z" fill="#fff" stroke="#fff" stroke-width=".9" stroke-linejoin="round"/></svg>
<svg class="abs" style="left:23px;top:104px" width="16" height="18" viewBox="0 0 16 18"><path d="M2 2 H14 V12.4 L10.6 15.9 H2 Z" fill="none" stroke="#fff" stroke-width="2" stroke-linejoin="miter"/><path d="M4.8 6 H11 M4.8 9.6 H11" stroke="#fff" stroke-width="2.1"/><path d="M10.2 16 V12 H14.2 Z" fill="#fff"/></svg>
<svg class="abs" style="left:24px;top:149px" width="14" height="18" viewBox="0 0 14 18"><rect x="1.8" y="2" width="10.4" height="14.3" rx=".6" fill="none" stroke="#fff" stroke-width="2"/><path d="M3.6 3.2 H10.4" stroke="#fff" stroke-width="1.6"/><path d="M5 13.6 H9" stroke="#fff" stroke-width="1.3"/></svg>
<div class="fbtn" style="top:194px;height:36px;border-radius:3px"></div>
<svg class="abs" style="left:23px;top:202px" width="16" height="20" viewBox="0 0 16 20"><path d="M2.2 6 V3.2 Q2.2 1.6 3.8 1.6 H12.2 Q13.8 1.6 13.8 3.2 V6 M2.2 14 V16.8 Q2.2 18.4 3.8 18.4 H12.2 Q13.8 18.4 13.8 16.8 V14" fill="none" stroke="#fff" stroke-width="1.6"/><text x="8.5" y="13" font-size="8.2" font-weight="bold" fill="#fff" text-anchor="middle" font-family="'Liberation Sans',sans-serif" letter-spacing="1">ON</text></svg>
<div class="abs" style="left:1093px;top:15px;width:92px;height:32px;background:#fff;border-radius:4px;box-shadow:0 2px 8px rgba(0,0,0,.07);font-size:12px;line-height:33px;text-align:center;color:#333">点我回原点</div>
<div class="abs" style="left:1189px;top:245px;width:6px;height:240px;background:#dcdcdc;border-radius:3px"></div>
<div class="abs" style="left:389px;top:764px;width:390px;height:6px;background:#dcdcdc;border-radius:3px"></div>
</div>
</body></html>
